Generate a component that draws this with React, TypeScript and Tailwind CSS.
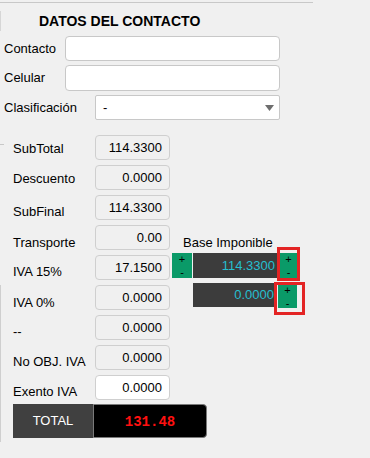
const rowsTop = [
  { label: "SubTotal", value: "114.3300", lp: "pt-[2px]", tick: true },
  { label: "Descuento", value: "0.0000", lp: "pt-[2px]" },
  { label: "SubFinal", value: "114.3300", lp: "pt-[9px]" },
  { label: "Transporte", value: "0.00", lp: "pt-[11px]", base: true },
  { label: "IVA 15%", value: "17.1500", lp: "pt-[9px]", iva15: true },
];

const rowsBottom = [
  { label: "IVA 0%", value: "0.0000", lp: "pt-[10px]", iva0: true },
  { label: "--", value: "0.0000", lp: "pt-[8px]" },
  { label: "No OBJ. IVA", value: "0.0000", lp: "pt-[8px]" },
  { label: "Exento IVA", value: "0.0000", lp: "pt-[8px]", white: true },
];

type Row = {
  label: string;
  value: string;
  lp: string;
  tick?: boolean;
  base?: boolean;
  iva15?: boolean;
  iva0?: boolean;
  white?: boolean;
};

const PlusMinus = ({ className }: { className: string }) => (
  <div
    className={`flex flex-col items-center justify-center gap-[2px] bg-[#0a9a68] text-black text-[11px] leading-[11px] ${className}`}
  >
    <span>+</span>
    <span>-</span>
  </div>
);

const ValueBox = ({ value, white }: { value: string; white?: boolean }) => (
  <div
    className={`w-[75px] h-[25px] shrink-0 flex items-center justify-end pr-[7px] border border-[#cfcfcf] rounded-[4px] ${
      white ? "bg-white" : "bg-[#f0f0f0]"
    }`}
  >
    {value}
  </div>
);

const TotalRow = ({ row, labelW }: { row: Row; labelW: string }) => (
  <div className="flex items-center h-[25px]">
    {row.tick && <span className="self-start mt-[9px] w-[4px] h-px bg-[#c8c8c8] mr-[9px]" />}
    <div className={`${labelW} shrink-0 ${row.lp}`}>{row.label}</div>
    <ValueBox value={row.value} white={row.white} />

    {row.base && <div className="self-end ml-[13px] leading-[15px]">Base Imponible</div>}

    {row.iva15 && (
      <div className="self-start -mt-[2px] ml-[2px] flex">
        <PlusMinus className="w-[20px] h-[25px]" />
        <div className="ml-[1px] w-[84px] h-[25px] bg-[#3c3c3c] text-[#25bfd0] flex items-center justify-end pr-[2px]">
          114.3300
        </div>
        <div className="relative ml-[3px]">
          <PlusMinus className="w-[17px] h-[25px]" />
          <span className="absolute -left-[3px] -top-[6px] -right-[3px] -bottom-[3px] border-[3px] border-[#e32424]" />
        </div>
      </div>
    )}

    {row.iva0 && (
      <div className="self-start -mt-[2px] ml-[23px] flex">
        <div className="w-[82px] h-[24px] bg-[#3c3c3c] text-[#25bfd0] flex items-center justify-end pr-[1px]">
          0.0000
        </div>
        <div className="relative ml-[3px] mt-[2px]">
          <PlusMinus className="w-[19px] h-[23px]" />
          <span className="absolute -left-[4px] -top-[3px] -right-[8px] -bottom-[7px] border-[3px] border-[#e32424]" />
        </div>
      </div>
    )}
  </div>
);

export default function App() {
  return (
    <div className="w-[370px] h-[458px] overflow-hidden bg-[#f0f0f0] text-black text-[13px] font-['Liberation_Sans',Arial,sans-serif]">
      <div className="mt-[2px] h-px w-[313px] bg-[#c8c8c8]" />

      {/* header */}
      <div className="h-[33px] flex items-center pt-[3px]">
        <span className="w-px h-[20px] bg-[#d6d6d6] mr-[38px]" />
        <span className="font-bold text-[14px]">DATOS DEL CONTACTO</span>
      </div>

      <div className="flex items-center h-[25px]">
        <div className="w-[65px] pl-[4px]">Contacto</div>
        <div className="w-[215px] h-full bg-white border border-[#c8c8c8] rounded-[4px]" />
      </div>
      <div className="mt-[4px] flex items-center h-[26px]">
        <div className="w-[65px] pl-[4px]">Celular</div>
        <div className="w-[215px] h-full bg-white border border-[#c8c8c8] rounded-[4px]" />
      </div>
      <div className="mt-[4px] flex items-center h-[25px]">
        <div className="w-[95px] pl-[4px]">Clasificación</div>
        <div className="w-[185px] h-full bg-white border border-[#c8c8c8] rounded-[2px] flex items-center justify-between pl-[7px] pr-[5px]">
          <span>-</span>
          <svg width="9" height="6" viewBox="0 0 9 6">
            <path d="M0 0 L9 0 L4.5 6 Z" fill="#6e6e6e" />
          </svg>
        </div>
      </div>

      {/* totals */}
      <div className="mt-[15px] flex flex-col gap-[5px]">
        {rowsTop.map((r) => (
          <TotalRow key={r.label} row={r} labelW={r.tick ? "w-[82px]" : "w-[82px] ml-[13px]"} />
        ))}
        <div className="border-l border-[#cfcfcf] flex flex-col gap-[5px] pb-[4px]">
          {rowsBottom.map((r) => (
            <TotalRow key={r.label} row={r} labelW="w-[82px] ml-[12px]" />
          ))}
          <div className="-mt-px ml-[12px] flex h-[34px]">
            <div className="w-[80px] h-full bg-[#404040] text-white flex items-center justify-center">TOTAL</div>
            <div className="w-[114px] h-full bg-black border border-[#7a7a7a] rounded-r-[4px] flex items-center justify-center pt-[2px]">
              <span className="text-[#ff1010] font-bold text-[14px] font-['Liberation_Mono',monospace]">131.48</span>
            </div>
          </div>
        </div>
      </div>
    </div>
  );
}
